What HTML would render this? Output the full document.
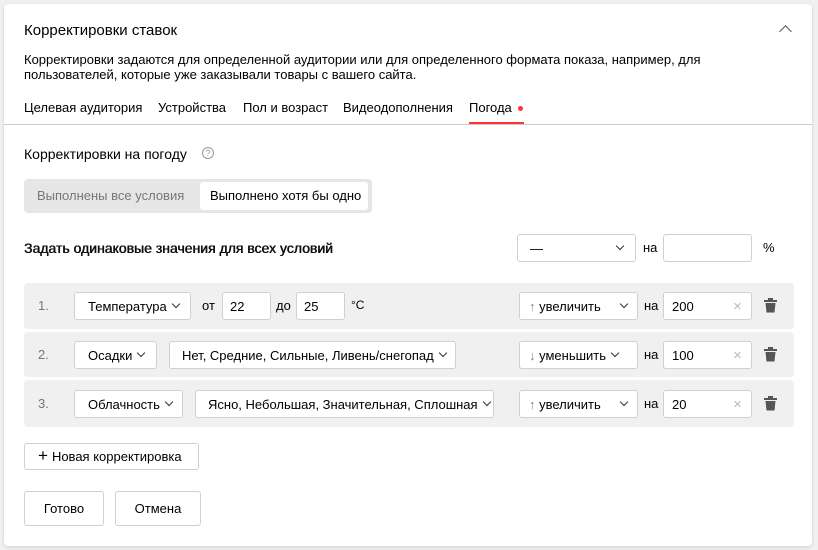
<!DOCTYPE html>
<html><head><meta charset="utf-8"><style>
*{box-sizing:border-box;margin:0;padding:0}
body{width:818px;height:550px;background:#f0f0f0;font-family:"Liberation Sans",sans-serif;color:#000;position:relative;overflow:hidden}
.card{position:absolute;left:4px;top:4px;width:808px;height:542px;background:#fff;border-radius:4px;box-shadow:0 1px 3px rgba(0,0,0,.15)}
.a{position:absolute;white-space:nowrap}
.t13{font-size:13px}
.box{position:absolute;border:1px solid #d0d0d0;border-radius:3px;background:#fff;font-size:13px;display:flex;align-items:center;white-space:nowrap}
.chev{display:inline-block;width:6px;height:6px;border-right:1px solid #333;border-bottom:1px solid #333;transform:rotate(45deg);margin-left:6px;margin-top:-4px}
.row{position:absolute;left:24px;width:770px;background:#f0f0f0;border-radius:4px}
.x{position:absolute;color:#bbb;font-size:15px;line-height:15px}
</style></head><body>
<div class="card"></div>
<div class="a" style="left:24px;top:22px;font-size:15px">Корректировки ставок</div>
<div class="a" style="left:781px;top:27px;width:9px;height:9px;border-left:1.2px solid #555;border-top:1.2px solid #555;transform:rotate(45deg)"></div>
<div class="a t13" style="left:24px;top:52px;line-height:15px">Корректировки задаются для определенной аудитории или для определенного формата показа, например, для<br>пользователей, которые уже заказывали товары с вашего сайта.</div>
<div class="a t13" style="left:24px;top:100px">Целевая аудитория</div>
<div class="a t13" style="left:158px;top:100px">Устройства</div>
<div class="a t13" style="left:243px;top:100px">Пол и возраст</div>
<div class="a t13" style="left:343px;top:100px">Видеодополнения</div>
<div class="a t13" style="left:469px;top:100px">Погода</div>
<div class="a" style="left:518px;top:106px;width:5px;height:5px;border-radius:50%;background:#f33"></div>
<div class="a" style="left:4px;top:124px;width:808px;height:1px;background:#ccc"></div>
<div class="a" style="left:469px;top:122px;width:55px;height:2px;background:#f33"></div>
<div class="a" style="left:24px;top:146px;font-size:14px">Корректировки на погоду</div>
<div class="a" style="left:202px;top:147px;width:12px;height:12px;border:1px solid #999;border-radius:50%;font-size:9px;color:#999;text-align:center;line-height:10px">?</div>
<div class="a" style="left:24px;top:179px;width:348px;height:34px;background:#e6e6e6;border-radius:4px"></div>
<div class="a t13" style="left:37px;top:188px;color:#777">Выполнены все условия</div>
<div class="a" style="left:200px;top:182px;width:168px;height:28px;background:#fff;border-radius:3px"></div>
<div class="a t13" style="left:210px;top:188px">Выполнено хотя бы одно</div>
<div class="a" style="left:24px;top:240px;font-size:14px;color:#111;text-shadow:0.4px 0 0 #111,-0.1px 0 0 #111">Задать одинаковые значения для всех условий</div>
<div class="box" style="left:517px;top:234px;width:119px;height:28px;padding-left:12px">—<span style="flex:1"></span><span class="chev" style="margin-right:12px"></span></div>
<div class="a t13" style="left:643px;top:240px">на</div>
<div class="box" style="left:663px;top:234px;width:89px;height:28px"></div>
<div class="a t13" style="left:763px;top:240px">%</div>

<div class="row" style="top:283px;height:46px"></div>
<div class="row" style="top:332px;height:45px"></div>
<div class="row" style="top:380px;height:47px"></div>

<div class="a t13" style="left:38px;top:298px;color:#777">1.</div>
<div class="box" style="left:74px;top:292px;width:117px;height:28px;padding-left:13px">Температура<span class="chev"></span></div>
<div class="a t13" style="left:202px;top:298px">от</div>
<div class="box" style="left:222px;top:292px;width:49px;height:28px;padding-left:7px">22</div>
<div class="a t13" style="left:276px;top:298px">до</div>
<div class="box" style="left:296px;top:292px;width:49px;height:28px;padding-left:7px">25</div>
<div class="a" style="left:351px;top:298px;font-size:12px">°C</div>

<div class="a t13" style="left:38px;top:347px;color:#777">2.</div>
<div class="box" style="left:74px;top:341px;width:83px;height:28px;padding-left:13px">Осадки<span class="chev"></span></div>
<div class="box" style="left:169px;top:341px;width:287px;height:28px;padding-left:12px">Нет, Средние, Сильные, Ливень/снегопад<span class="chev"></span></div>

<div class="a t13" style="left:38px;top:396px;color:#777">3.</div>
<div class="box" style="left:74px;top:390px;width:109px;height:28px;padding-left:13px">Облачность<span class="chev"></span></div>
<div class="box" style="left:195px;top:390px;width:299px;height:28px;padding-left:12px">Ясно, Небольшая, Значительная, Сплошная<span class="chev"></span></div>

<div class="box" style="left:519px;top:292px;width:119px;height:28px;padding-left:9px"><span style="color:#888">↑</span>&nbsp;увеличить<span style="flex:1"></span><span class="chev" style="margin-right:10px"></span></div>
<div class="box" style="left:519px;top:341px;width:119px;height:28px;padding-left:9px"><span style="color:#888">↓</span>&nbsp;уменьшить<span class="chev"></span></div>
<div class="box" style="left:519px;top:390px;width:119px;height:28px;padding-left:9px"><span style="color:#888">↑</span>&nbsp;увеличить<span style="flex:1"></span><span class="chev" style="margin-right:10px"></span></div>
<div class="a t13" style="left:644px;top:298px">на</div>
<div class="a t13" style="left:644px;top:347px">на</div>
<div class="a t13" style="left:644px;top:396px">на</div>
<div class="box" style="left:663px;top:292px;width:89px;height:28px;padding-left:8px">200</div>
<div class="box" style="left:663px;top:341px;width:89px;height:28px;padding-left:8px">100</div>
<div class="box" style="left:663px;top:390px;width:89px;height:28px;padding-left:8px">20</div>
<div class="x" style="left:733px;top:299px">×</div>
<div class="x" style="left:733px;top:348px">×</div>
<div class="x" style="left:733px;top:397px">×</div>
<svg class="a" style="left:764px;top:297px" width="13" height="16" viewBox="0 0 13 16"><path d="M4 1h5v2h4v2H0V3h4z M1.5 6h10l-1 9.5h-8z" fill="#555"/></svg>
<svg class="a" style="left:764px;top:346px" width="13" height="16" viewBox="0 0 13 16"><path d="M4 1h5v2h4v2H0V3h4z M1.5 6h10l-1 9.5h-8z" fill="#555"/></svg>
<svg class="a" style="left:764px;top:395px" width="13" height="16" viewBox="0 0 13 16"><path d="M4 1h5v2h4v2H0V3h4z M1.5 6h10l-1 9.5h-8z" fill="#555"/></svg>

<div class="box" style="left:24px;top:443px;width:175px;height:27px;padding-left:13px"><span style="font-size:17px;margin-right:4px;margin-top:-2px">+</span>Новая корректировка</div>
<div class="box" style="left:24px;top:491px;width:80px;height:35px;justify-content:center">Готово</div>
<div class="box" style="left:115px;top:491px;width:86px;height:35px;justify-content:center">Отмена</div>
</body></html>
